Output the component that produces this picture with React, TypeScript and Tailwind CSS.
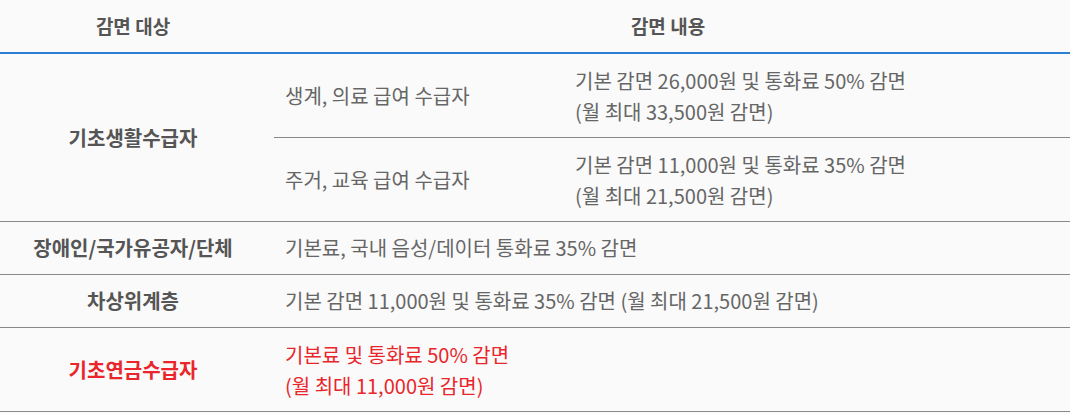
import React from "react";

const font = { fontFamily: '"Noto Sans CJK KR", "Noto Sans", sans-serif' };

const App: React.FC = () => {
  return (
    <div
      className="w-[1070px] h-[414px] bg-[#fafafa] text-[20px] text-[#666666]"
      style={font}
    >
      {/* header */}
      <div className="flex h-[54px] border-b-2 border-[#2b7fd4] font-bold text-[19px] text-[#555555]">
        <div className="w-[266px] flex items-center justify-center">감면 대상</div>
        <div className="flex-1 flex items-center justify-center">감면 내용</div>
      </div>

      {/* 기초생활수급자 */}
      <div className="flex border-b border-[#888888]">
        <div className="w-[266px] flex items-center justify-center font-bold text-[#555555]">
          기초생활수급자
        </div>
        <div className="flex-1 pl-2">
          <div className="flex h-[84px] items-center border-b border-[#888888]">
            <div className="w-[301px] pl-[11px]">생계, 의료 급여 수급자</div>
            <div className="leading-[31px]">
              <p>기본 감면 26,000원 및 통화료 50% 감면</p>
              <p>(월 최대 33,500원 감면)</p>
            </div>
          </div>
          <div className="flex h-[83px] items-center">
            <div className="w-[301px] pl-[11px]">주거, 교육 급여 수급자</div>
            <div className="leading-[31px]">
              <p>기본 감면 11,000원 및 통화료 35% 감면</p>
              <p>(월 최대 21,500원 감면)</p>
            </div>
          </div>
        </div>
      </div>

      {/* 장애인/국가유공자/단체 */}
      <div className="flex h-[53px] border-b border-[#888888]">
        <div className="w-[266px] flex items-center justify-center font-bold text-[#555555]">
          장애인/국가유공자/단체
        </div>
        <div className="flex-1 flex items-center pl-[19px]">
          기본료, 국내 음성/데이터 통화료 35% 감면
        </div>
      </div>

      {/* 차상위계층 */}
      <div className="flex h-[53px] border-b border-[#888888]">
        <div className="w-[266px] flex items-center justify-center font-bold text-[#555555]">
          차상위계층
        </div>
        <div className="flex-1 flex items-center pl-[19px]">
          기본 감면 11,000원 및 통화료 35% 감면 (월 최대 21,500원 감면)
        </div>
      </div>

      {/* 기초연금수급자 */}
      <div className="flex h-[84px] border-b border-[#888888] text-[#e8262b]">
        <div className="w-[266px] flex items-center justify-center font-bold">
          기초연금수급자
        </div>
        <div className="flex-1 flex items-center pl-[19px] leading-[31px]">
          <div>
            <p>기본료 및 통화료 50% 감면</p>
            <p>(월 최대 11,000원 감면)</p>
          </div>
        </div>
      </div>
    </div>
  );
};

export default App;
